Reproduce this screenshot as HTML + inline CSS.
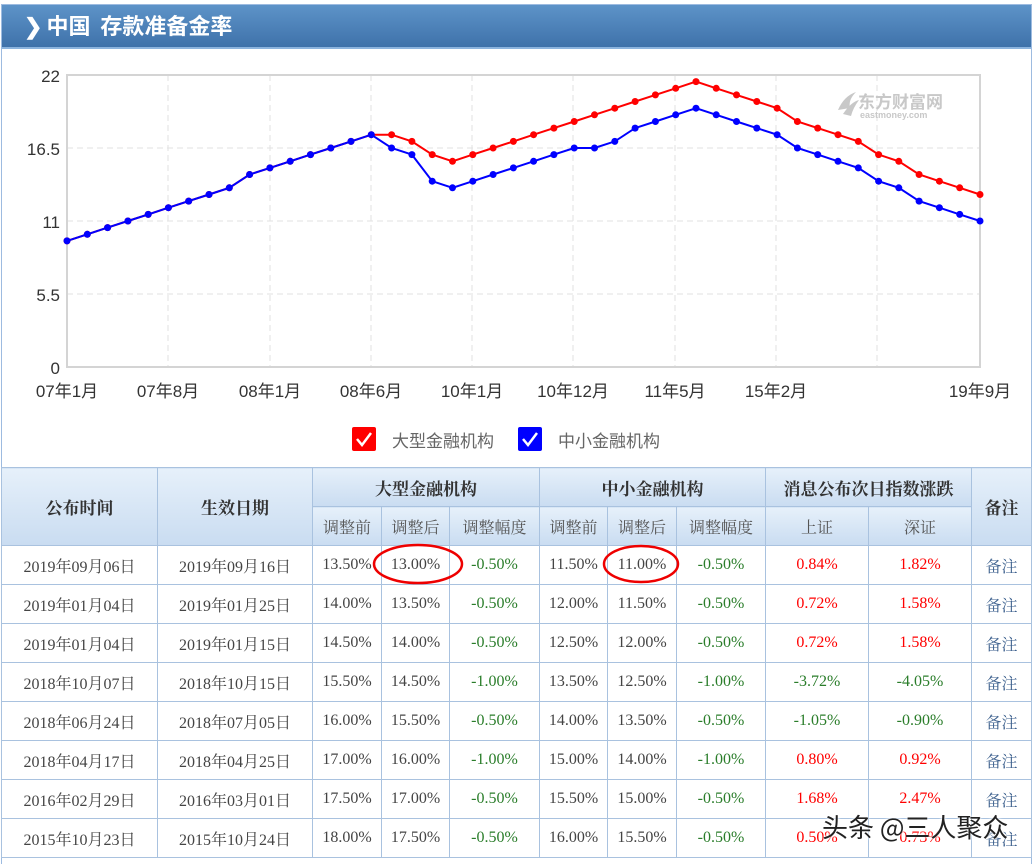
<!DOCTYPE html>
<html><head><meta charset="utf-8"><style>
*{margin:0;padding:0;box-sizing:border-box}
body{width:1036px;height:853px;overflow:hidden;background:#fff;position:relative;font-family:"Liberation Sans","Noto Sans CJK SC",sans-serif}
.frame{position:absolute;left:1px;top:4px;width:1031px;height:860px;border:1px solid #9dbbe0;border-bottom:none}
.title{position:absolute;left:2px;top:5px;width:1029px;height:44px;background:linear-gradient(#5d93c8,#3f72aa);border-bottom:2px solid #8cb4de;color:#fff;font-size:22px;font-weight:bold;line-height:40px;padding-left:22px;font-family:"Noto Sans CJK SC",sans-serif}
.title span{display:inline-block;margin-right:4px}
svg{position:absolute;left:0;top:0}
table{position:absolute;left:1px;top:467px;border-collapse:collapse;table-layout:fixed;font-family:"Liberation Serif","Noto Serif CJK SC",serif;font-size:16px;color:#444}
td,th{border:1px solid #a9c2df;text-align:center;height:39px;padding:0;white-space:nowrap;overflow:hidden}
th{background:linear-gradient(#e6f0fa,#c9dcf1);font-weight:bold;color:#333;font-family:"Noto Serif CJK SC",serif;font-size:17px}
th.s{font-weight:normal;color:#555;font-size:16px}
.g{color:#2a7d2a}.r{color:#f00}.b{color:#3a5e8c}
.wm{position:absolute;left:822px;top:808px;font-size:26px;color:#222;font-family:"Noto Sans CJK SC",sans-serif;text-shadow:0 0 3px #fff,0 0 3px #fff}
</style></head><body>
<div class="frame"></div>
<div class="title"><span>❯</span>中国&nbsp; 存款准备金率</div>
<svg width="1036" height="467" id="c">
<g stroke="#e2e2e2" stroke-dasharray="6,4" stroke-width="1">
<line x1="67" y1="148" x2="980" y2="148"/><line x1="67" y1="221" x2="980" y2="221"/><line x1="67" y1="294" x2="980" y2="294"/>
<line x1="168" y1="75" x2="168" y2="367"/><line x1="270" y1="75" x2="270" y2="367"/><line x1="371" y1="75" x2="371" y2="367"/><line x1="472" y1="75" x2="472" y2="367"/><line x1="573" y1="75" x2="573" y2="367"/><line x1="675" y1="75" x2="675" y2="367"/><line x1="776" y1="75" x2="776" y2="367"/><line x1="877" y1="75" x2="877" y2="367"/>
</g>
<rect x="67" y="75" width="913" height="292" fill="none" stroke="#d4d4d4" stroke-width="2"/>
<g font-size="17" fill="#333" text-anchor="end" font-family="Liberation Sans,sans-serif">
<text x="60" y="82">22</text><text x="60" y="155">16.5</text><text x="60" y="228">11</text><text x="60" y="301">5.5</text><text x="60" y="374">0</text></g>
<g font-size="17" fill="#333" text-anchor="middle" font-family="Liberation Sans,Noto Sans CJK SC,sans-serif">
<text x="67" y="397">07年1月</text><text x="168" y="397">07年8月</text><text x="270" y="397">08年1月</text><text x="371" y="397">08年6月</text><text x="472" y="397">10年1月</text><text x="573" y="397">10年12月</text><text x="675" y="397">11年5月</text><text x="776" y="397">15年2月</text><text x="980" y="397">19年9月</text></g>
<g fill="#c8c8c8"><path d="M838 110 q6-14 18-18 q-8 8-6 16z M843 114 q8-12 16-14 q-6 8-8 16z"/>
<text x="858" y="108" font-size="17" font-weight="bold" font-family="Noto Sans CJK SC,sans-serif">东方财富网</text>
<text x="860" y="118" font-size="9" font-weight="bold">eastmoney.com</text></g>
<g id="lines"></g>
<rect x="352" y="427" width="24" height="24" rx="2" fill="#f00"/><path d="M357 439 l5 6 l9-12" stroke="#fff" stroke-width="2.5" fill="none"/>
<text x="392" y="447" font-size="17" fill="#666" font-family="Noto Sans CJK SC,sans-serif">大型金融机构</text>
<rect x="518" y="427" width="24" height="24" rx="2" fill="#00f"/><path d="M523 439 l5 6 l9-12" stroke="#fff" stroke-width="2.5" fill="none"/>
<text x="558" y="447" font-size="17" fill="#666" font-family="Noto Sans CJK SC,sans-serif">中小金融机构</text>
</svg>
<table>
<colgroup><col style="width:156px"><col style="width:155px"><col style="width:69px"><col style="width:68px"><col style="width:90px"><col style="width:68px"><col style="width:69px"><col style="width:89px"><col style="width:103px"><col style="width:103px"><col style="width:60px"></colgroup>
<tr><th rowspan="2">公布时间</th><th rowspan="2">生效日期</th><th colspan="3">大型金融机构</th><th colspan="3">中小金融机构</th><th colspan="2">消息公布次日指数涨跌</th><th rowspan="2">备注</th></tr>
<tr><th class="s">调整前</th><th class="s">调整后</th><th class="s">调整幅度</th><th class="s">调整前</th><th class="s">调整后</th><th class="s">调整幅度</th><th class="s">上证</th><th class="s">深证</th></tr>
<tr><td>2019年09月06日</td><td>2019年09月16日</td><td>13.50%</td><td>13.00%</td><td class="g">-0.50%</td><td>11.50%</td><td>11.00%</td><td class="g">-0.50%</td><td class="r">0.84%</td><td class="r">1.82%</td><td class="b">备注</td></tr>
<tr><td>2019年01月04日</td><td>2019年01月25日</td><td>14.00%</td><td>13.50%</td><td class="g">-0.50%</td><td>12.00%</td><td>11.50%</td><td class="g">-0.50%</td><td class="r">0.72%</td><td class="r">1.58%</td><td class="b">备注</td></tr>
<tr><td>2019年01月04日</td><td>2019年01月15日</td><td>14.50%</td><td>14.00%</td><td class="g">-0.50%</td><td>12.50%</td><td>12.00%</td><td class="g">-0.50%</td><td class="r">0.72%</td><td class="r">1.58%</td><td class="b">备注</td></tr>
<tr><td>2018年10月07日</td><td>2018年10月15日</td><td>15.50%</td><td>14.50%</td><td class="g">-1.00%</td><td>13.50%</td><td>12.50%</td><td class="g">-1.00%</td><td class="g">-3.72%</td><td class="g">-4.05%</td><td class="b">备注</td></tr>
<tr><td>2018年06月24日</td><td>2018年07月05日</td><td>16.00%</td><td>15.50%</td><td class="g">-0.50%</td><td>14.00%</td><td>13.50%</td><td class="g">-0.50%</td><td class="g">-1.05%</td><td class="g">-0.90%</td><td class="b">备注</td></tr>
<tr><td>2018年04月17日</td><td>2018年04月25日</td><td>17.00%</td><td>16.00%</td><td class="g">-1.00%</td><td>15.00%</td><td>14.00%</td><td class="g">-1.00%</td><td class="r">0.80%</td><td class="r">0.92%</td><td class="b">备注</td></tr>
<tr><td>2016年02月29日</td><td>2016年03月01日</td><td>17.50%</td><td>17.00%</td><td class="g">-0.50%</td><td>15.50%</td><td>15.00%</td><td class="g">-0.50%</td><td class="r">1.68%</td><td class="r">2.47%</td><td class="b">备注</td></tr>
<tr><td>2015年10月23日</td><td>2015年10月24日</td><td>18.00%</td><td>17.50%</td><td class="g">-0.50%</td><td>16.00%</td><td>15.50%</td><td class="g">-0.50%</td><td class="r">0.50%</td><td class="r">0.73%</td><td class="b">备注</td></tr>
</table>
<svg width="1036" height="853" style="pointer-events:none">
<ellipse cx="418" cy="564" rx="44" ry="19" fill="none" stroke="#e00" stroke-width="2.5"/>
<ellipse cx="641" cy="564" rx="37" ry="18" fill="none" stroke="#e00" stroke-width="2.5"/>
</svg>
<div class="wm">头条 @三人聚众</div>
<script>
var red=[9.5,10,10.5,11,11.5,12,12.5,13,13.5,14.5,15,15.5,16,16.5,17,17.5,17.5,17,16,15.5,16,16.5,17,17.5,18,18.5,19,19.5,20,20.5,21,21.5,21,20.5,20,19.5,18.5,18,17.5,17,16,15.5,14.5,14,13.5,13];
var blue=red.slice(0,16).concat([16.5,16,14,13.5,14,14.5,15,15.5,16,16.5,16.5,17,18,18.5,19,19.5,19,18.5,18,17.5,16.5,16,15.5,15,14,13.5,12.5,12,11.5,11]);
var g=document.getElementById('lines'),h='';
function draw(a,c){var n=a.length,p=[];for(var i=0;i<n;i++){var x=67+i*(913/(n-1)),y=367-a[i]*292/22;p.push(x.toFixed(1)+','+y.toFixed(1));}
h+='<polyline points="'+p.join(' ')+'" fill="none" stroke="'+c+'" stroke-width="2"/>';
p.forEach(function(q){var s=q.split(',');h+='<circle cx="'+s[0]+'" cy="'+s[1]+'" r="3.5" fill="'+c+'"/>';});}
draw(red,'#f00');draw(blue,'#00f');g.innerHTML=h;
</script>
</body></html>
